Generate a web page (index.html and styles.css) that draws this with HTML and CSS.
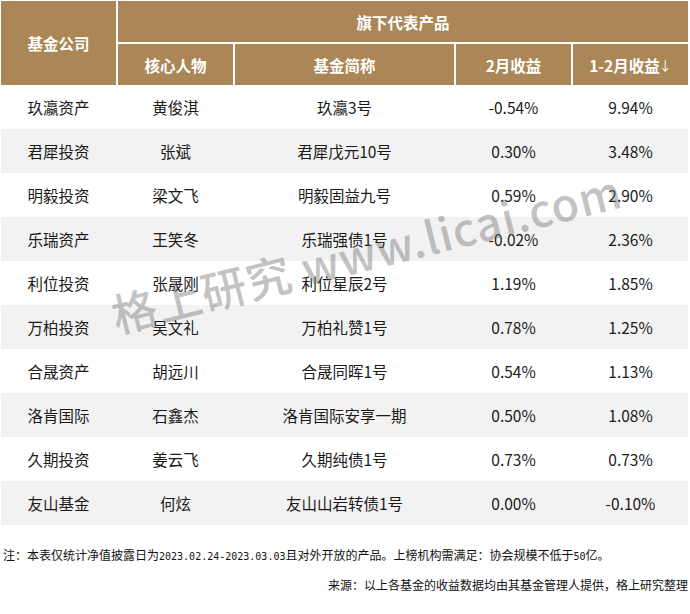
FILE: index.html
```
<!DOCTYPE html>
<html lang="zh">
<head>
<meta charset="utf-8">
<link rel="stylesheet" href="styles.css">
</head>
<body>
<div class="page">
  <div class="head">
    <div class="h h-company">基金公司</div>
    <div class="h h-group">旗下代表产品</div>
    <div class="h">核心人物</div>
    <div class="h">基金简称</div>
    <div class="h">2月收益</div>
    <div class="h">1-2月收益<span class="arrow">↓</span></div>
  </div>
  <div class="body">
    <div class="row"><div>玖瀛资产</div><div>黄俊淇</div><div>玖瀛3号</div><div>-0.54%</div><div>9.94%</div></div>
    <div class="row alt"><div>君犀投资</div><div>张斌</div><div>君犀戊元10号</div><div>0.30%</div><div>3.48%</div></div>
    <div class="row"><div>明毅投资</div><div>梁文飞</div><div>明毅固益九号</div><div>0.59%</div><div>2.90%</div></div>
    <div class="row alt"><div>乐瑞资产</div><div>王笑冬</div><div>乐瑞强债1号</div><div>-0.02%</div><div>2.36%</div></div>
    <div class="row"><div>利位投资</div><div>张晟刚</div><div>利位星辰2号</div><div>1.19%</div><div>1.85%</div></div>
    <div class="row alt"><div>万柏投资</div><div>吴文礼</div><div>万柏礼赞1号</div><div>0.78%</div><div>1.25%</div></div>
    <div class="row"><div>合晟资产</div><div>胡远川</div><div>合晟同晖1号</div><div>0.54%</div><div>1.13%</div></div>
    <div class="row alt"><div>洛肯国际</div><div>石鑫杰</div><div>洛肯国际安享一期</div><div>0.50%</div><div>1.08%</div></div>
    <div class="row"><div>久期投资</div><div>姜云飞</div><div>久期纯债1号</div><div>0.73%</div><div>0.73%</div></div>
    <div class="row alt"><div>友山基金</div><div>何炫</div><div>友山山岩转债1号</div><div>0.00%</div><div>-0.10%</div></div>
    <div class="watermark">格上研究 www.licai.com</div>
  </div>
  <p class="note">注：本表仅统计净值披露日为<span class="mono">2023.02.24-2023.03.03</span>且对外开放的产品。上榜机构需满足：协会规模不低于<span class="mono">50</span>亿。</p>
  <p class="source">来源：以上各基金的收益数据均由其基金管理人提供，格上研究整理</p>
</div>
</body>
</html>
```
FILE: styles.css
```
html, body {
  margin: 0;
  padding: 0;
  background: #ffffff;
}
.page {
  width: 690px;
  padding-top: 1px;
  font-family: "Noto Sans CJK SC", "Noto Sans", sans-serif;
  color: #1a1a1a;
}
.head {
  display: grid;
  grid-template-columns: 115px 115px 219px 115px 115px;
  grid-template-rows: 41px 41px;
  gap: 2px;
  margin-left: 1px;
}
.h {
  background: #ab8656;
  color: #ffffff;
  font-weight: bold;
  font-size: 15.5px;
  display: flex;
  align-items: center;
  justify-content: center;
}
.h-company {
  grid-row: 1 / span 2;
}
.h-group {
  grid-column: 2 / span 4;
}
.arrow {
  font-weight: normal;
  font-size: 13px;
  margin-left: -1px;
}
.body {
  position: relative;
  overflow: hidden;
}
.row {
  display: grid;
  grid-template-columns: 115px 115px 219px 115px 115px;
  column-gap: 2px;
  height: 44px;
  margin-left: 1px;
  width: 687px;
  align-items: center;
  font-size: 15.5px;
}
.row > div {
  text-align: center;
}
.row.alt {
  background: #f2f2f2;
}
.watermark {
  position: absolute;
  left: 120px;
  top: 196px;
  font-size: 45px;
  font-weight: 500;
  color: rgba(120, 120, 120, 0.45);
  white-space: nowrap;
  transform: rotate(-14deg);
  transform-origin: left bottom;
  letter-spacing: 1px;
  pointer-events: none;
}
.note {
  margin: 22px 0 0 3px;
  font-size: 12px;
  line-height: 16px;
  color: #111;
}
.source {
  margin: 12px 2px 0 0;
  text-align: right;
  font-size: 12px;
  line-height: 16px;
  color: #111;
}
.mono {
  font-family: "DejaVu Sans Mono", "Liberation Mono", monospace;
  font-size: 10px;
}
```
